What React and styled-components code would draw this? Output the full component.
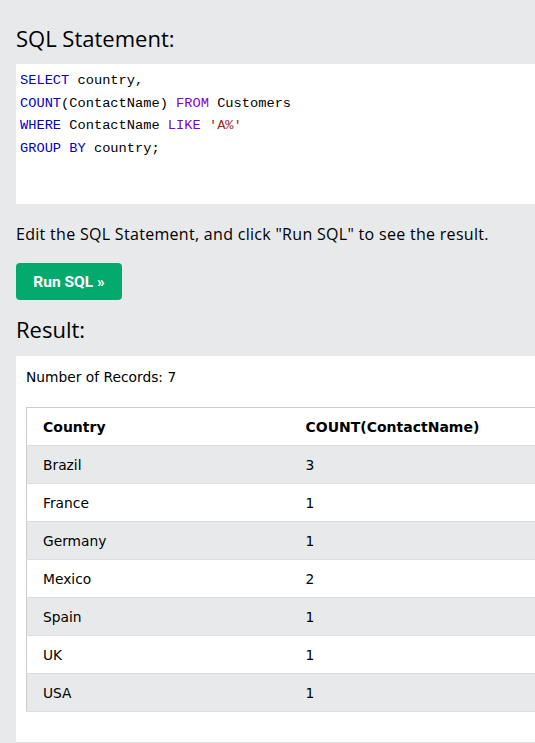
import React from 'react';
import styled, { createGlobalStyle } from 'styled-components';

const GlobalStyle = createGlobalStyle`
  html, body {
    margin: 0;
    padding: 0;
    background: #e7e9eb;
    overflow: hidden;
  }
  body {
    font-family: "Open Sans", "Liberation Sans", sans-serif;
    color: #000;
  }
`;

const rows = [
  ['Brazil', 3],
  ['France', 1],
  ['Germany', 1],
  ['Mexico', 2],
  ['Spain', 1],
  ['UK', 1],
  ['USA', 1]
];

export default function App() {
  return (
    <>
      <GlobalStyle />
      <Page>
        <Heading>SQL Statement:</Heading>
        <CodeBox>
          <Line>
            <Kw>SELECT</Kw> country,
          </Line>
          <Line>
            <Kw>COUNT</Kw>(ContactName) <Kw2>FROM</Kw2> Customers
          </Line>
          <Line>
            <Kw>WHERE</Kw> ContactName <Kw2>LIKE</Kw2> <Str>'A%'</Str>
          </Line>
          <Line>
            <Kw>GROUP BY</Kw> country;
          </Line>
        </CodeBox>
        <Hint>Edit the SQL Statement, and click "Run SQL" to see the result.</Hint>
        <RunButton>Run SQL »</RunButton>
        <Heading $result>Result:</Heading>
        <ResultPanel>
          <Count>Number of Records: 7</Count>
          <Table>
            <thead>
              <tr>
                <Th>Country</Th>
                <Th>COUNT(ContactName)</Th>
              </tr>
            </thead>
            <tbody>
              {rows.map(([country, n], i) => (
                <Tr key={country} $odd={i % 2 === 0}>
                  <Td>{country}</Td>
                  <Td>{n}</Td>
                </Tr>
              ))}
            </tbody>
          </Table>
        </ResultPanel>
      </Page>
    </>
  );
}

const Page = styled.div`
  width: 580px;
  padding: 0 0 0 16px;
  border-left: 1px solid #dcdee0;
  margin-left: -1px;
`;

const Heading = styled.h2`
  margin: 0;
  padding-top: ${p => (p.$result ? '13px' : '22px')};
  padding-bottom: ${p => (p.$result ? '11px' : '10px')};
  font-size: 22px;
  font-weight: 400;
  line-height: 32px;
`;

const CodeBox = styled.div`
  background: #fff;
  height: 140px;
  box-sizing: border-box;
  padding: 6px 4px;
  font-family: "Liberation Mono", "DejaVu Sans Mono", monospace;
  font-size: 13.7px;
`;

const Line = styled.div`
  line-height: 22.5px;
  white-space: pre;
`;

const Kw = styled.span`
  color: #0000cd;
`;

const Kw2 = styled.span`
  color: #7d00d9;
`;

const Str = styled.span`
  color: #a52a2a;
`;

const Hint = styled.p`
  margin: 0;
  padding-top: 19px;
  font-size: 16px;
  letter-spacing: 0.3px;
  line-height: 22px;
`;

const RunButton = styled.button`
  margin-top: 18px;
  width: 106px;
  height: 37px;
  border: none;
  border-radius: 4px;
  background: #04aa6d;
  color: #fff;
  font-family: "Roboto", "Liberation Sans", sans-serif;
  font-weight: 700;
  font-size: 15.5px;
  cursor: pointer;
  display: block;
`;

const ResultPanel = styled.div`
  background: #fff;
  padding: 10px 10px 30px 10px;
  border-bottom: 1px solid #dcdee0;
`;

const Count = styled.div`
  font-family: "DejaVu Sans", Verdana, sans-serif;
  font-size: 13.8px;
  line-height: 22px;
  margin-bottom: 19px;
`;

const Table = styled.table`
  width: 100%;
  border-collapse: collapse;
  border: 1px solid #ccc;
  font-family: "DejaVu Sans", Verdana, sans-serif;
  font-size: 13.8px;
`;

const Th = styled.th`
  text-align: left;
  font-weight: 700;
  font-size: 14px;
  height: 38px;
  box-sizing: border-box;
  padding: 0 16px;
  border-bottom: 1px solid #ddd;
  &:first-child {
    width: 263px;
  }
`;

const Tr = styled.tr`
  background: ${p => (p.$odd ? '#e7e9eb' : '#fff')};
`;

const Td = styled.td`
  height: 38px;
  box-sizing: border-box;
  padding: 0 16px;
  border-bottom: 1px solid #ddd;
`;
